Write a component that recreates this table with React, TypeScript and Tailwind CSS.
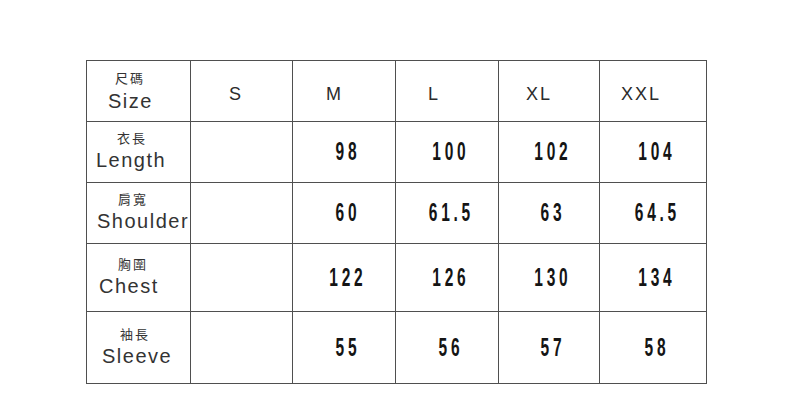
import React from 'react';

type Row = {
  zh: string;
  en: string;
  zhPad: string;
  enPad: string;
  h: string;
  values: string[];
};

const SIZES = [
  { label: 'S', pad: 'pl-[38px]' },
  { label: 'M', pad: 'pl-[33px]' },
  { label: 'L', pad: 'pl-[32px]' },
  { label: 'XL', pad: 'pl-[27px]' },
  { label: 'XXL', pad: 'pl-[21px]' },
];

const ROWS: Row[] = [
  { zh: '衣長', en: 'Length', zhPad: 'pl-[30px]', enPad: 'pl-[9px]', h: 'h-[61px]', values: ['98', '100', '102', '104'] },
  { zh: '肩寬', en: 'Shoulder', zhPad: 'pl-[31px]', enPad: 'pl-[10px]', h: 'h-[61px]', values: ['60', '61.5', '63', '64.5'] },
  { zh: '胸圍', en: 'Chest', zhPad: 'pl-[31px]', enPad: 'pl-[12px]', h: 'h-[68px]', values: ['122', '126', '130', '134'] },
  { zh: '袖長', en: 'Sleeve', zhPad: 'pl-[33px]', enPad: 'pl-[15px]', h: 'h-[72px]', values: ['55', '56', '57', '58'] },
];

const cell = 'border-r border-b border-[#4f4f4f]';
const sans = "font-['Liberation_Sans','Noto_Sans_CJK_TC',sans-serif]";

export default function App() {
  return (
    <div className="w-[790px] h-[408px] bg-white pt-[60px] pl-[86px]">
      <div className="grid grid-cols-[104px_102px_103px_103px_101px_107px] w-fit border-l border-t border-[#4f4f4f] text-[#333]">
        {/* header row */}
        <div className={`${cell} h-[61px] flex flex-col justify-center ${sans}`}>
          <span className="pl-[28px] text-[13px] leading-[14px] tracking-[2px] mb-[5px]">尺碼</span>
          <span className="pl-[21px] text-[20px] leading-[20px] tracking-[1.5px] font-medium">Size</span>
        </div>
        {SIZES.map((s) => (
          <div key={s.label} className={`${cell} h-[61px] flex items-center ${s.pad} ${sans} text-[18px] tracking-[2px] pt-[6px] text-[#2b2b2b]`}>
            {s.label}
          </div>
        ))}

        {ROWS.map((r) => (
          <React.Fragment key={r.en}>
            <div className={`${cell} ${r.h} flex flex-col justify-center pb-[2px] ${sans}`}>
              <span className={`${r.zhPad} text-[13px] leading-[14px] tracking-[2px] mb-[4px]`}>{r.zh}</span>
              <span className={`${r.enPad} text-[20px] leading-[20px] tracking-[1.5px]`}>{r.en}</span>
            </div>
            <div className={`${cell} ${r.h}`} />
            {r.values.map((v, i) => (
              <div key={i} className={`${cell} ${r.h} flex items-center justify-center pl-[8px]`}>
                <span className="inline-block scale-x-[0.62] font-['Liberation_Sans',sans-serif] font-bold text-[25px] tracking-[6px] text-[#151515]">
                  {v}
                </span>
              </div>
            ))}
          </React.Fragment>
        ))}
      </div>
    </div>
  );
}
